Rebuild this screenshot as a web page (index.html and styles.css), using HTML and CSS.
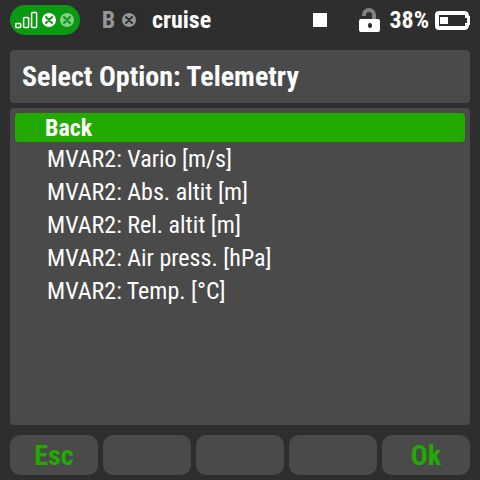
FILE: index.html
```
<!DOCTYPE html>
<html lang="en">

<head>
    <meta charset="UTF-8">
    <meta name="viewport" content="width=device-width, initial-scale=1.0">
    <title>Select Option: Telemetry</title>
    <link rel="stylesheet" href="styles.css">
</head>

<body>

    <header class="status-bar">
        <div class="link active">
            <!-- signal bars and two crossed dots -->
            <svg width="60" height="20" viewBox="0 0 60 20">
                <g fill="none" stroke="#fff" stroke-width="1.5">
                    <rect x="0.7" y="13.4" width="5" height="4" rx="1" />
                    <rect x="8.6" y="7.6" width="5" height="9.8" rx="1" />
                    <rect x="16.6" y="2.6" width="5" height="14.8" rx="1" />
                </g>
                <circle cx="34" cy="10" r="7" fill="#fff" />
                <path d="M31 7l6 6M37 7l-6 6" stroke="#0a9a12" stroke-width="2" stroke-linecap="round" />
                <circle cx="52" cy="10" r="7" fill="#84cc88" />
                <path d="M49 7l6 6M55 7l-6 6" stroke="#0a9a12" stroke-width="2" stroke-linecap="round" />
            </svg>
        </div>
        <div class="link">
            <span>B</span>
            <svg width="14" height="14" viewBox="0 0 14 14">
                <circle cx="7" cy="7" r="7" fill="#969696" />
                <path d="M4 4l6 6M10 4l-6 6" stroke="#2d2d2d" stroke-width="2" stroke-linecap="round" />
            </svg>
        </div>
        <div class="mode">cruise</div>
        <div class="stop"></div>
        <svg class="lock" width="21" height="24" viewBox="0 0 21 24">
            <path d="M5 8V7a5 5 0 0 1 10 0v5" fill="none" stroke="#828282" stroke-width="4" />
            <rect y="11" width="21" height="13" rx="2" fill="#fff" />
            <rect x="9" y="15" width="4" height="5" rx="2" fill="#2d2d2d" />
        </svg>
        <div class="percent">38%</div>
        <svg class="battery" width="35" height="19" viewBox="0 0 35 19">
            <path d="M4 2h25q3 0 3 3v2h1v5h-1v2q0 3-3 3H4q-2 0-2-2V4q0-2 2-2z" fill="none" stroke="#fff" stroke-width="4" />
            <path d="M4 4h26v3h2v5h-2v3H4z" fill="#2d2d2d" />
            <rect x="5" y="6" width="8" height="7" fill="#fff" />
        </svg>
    </header>

    <h1 class="title">Select Option: Telemetry</h1>

    <main class="options">
        <button type="button" class="option selected">Back</button>
        <button type="button" class="option">MVAR2: Vario [m/s]</button>
        <button type="button" class="option">MVAR2: Abs. altit [m]</button>
        <button type="button" class="option">MVAR2: Rel. altit [m]</button>
        <button type="button" class="option">MVAR2: Air press. [hPa]</button>
        <button type="button" class="option">MVAR2: Temp. [°C]</button>
    </main>

    <footer class="keys">
        <button type="button">Esc</button>
        <button type="button" aria-label="F1"></button>
        <button type="button" aria-label="F2"></button>
        <button type="button" aria-label="F3"></button>
        <button type="button">Ok</button>
    </footer>

</body>

</html>
```
FILE: styles.css
```
:root {
    --background: #2e2e2e;
    --panel: #4a4a4a;
    --accent: #22aa00;
    --link: #0a9a12;
}

* {
    margin: 0;
    padding: 0;
    box-sizing: border-box;
}

body {
    min-height: 100vh;
    display: flex;
    flex-direction: column;
    padding: 0 10px 5px;
    background-color: var(--background);
    color: #fff;
    font-family: "Roboto Condensed", "Liberation Sans Narrow", Roboto, sans-serif;
    font-size: 24px;
}

button {
    border: none;
    font-family: inherit;
    cursor: pointer;
}

.status-bar {
    display: flex;
    align-items: center;
    height: 40px;
    margin-bottom: 10px;
    font-weight: bold;
}

.link {
    display: flex;
    align-items: center;
    justify-content: center;
    gap: 7px;
    height: 30px;
    border-radius: 15px;
    width: 54px;
    margin-left: 12px;
    background-color: #2d2d2d;
    color: #969696;
}

.link.active {
    width: 70px;
    margin-left: 0;
    background-color: var(--link);
}

.mode {
    flex: 1;
    margin-left: 6px;
}

.stop {
    width: 14px;
    height: 14px;
    margin-right: 32px;
    background-color: #fff;
}

.lock {
    margin-right: 9px;
}

.percent {
    margin-right: 6px;
}

.title {
    height: 53px;
    padding: 0 12px;
    margin-bottom: 5px;
    border-radius: 4px;
    background-color: var(--panel);
    font-size: 28px;
    line-height: 53px;
}

.options {
    flex: 1;
    display: flex;
    flex-direction: column;
    padding: 5px;
    margin-bottom: 10px;
    border-radius: 4px;
    background-color: var(--panel);
}

.option {
    padding: 2px 32px 0;
    border-radius: 4px;
    background-color: transparent;
    color: #fff;
    font-size: 24px;
    line-height: 31px;
    text-align: left;
}

.option.selected {
    padding: 2px 30px 0;
    background-color: var(--accent);
    font-weight: bold;
    line-height: 27px;
}

.keys {
    display: grid;
    grid-template-columns: repeat(5, 1fr);
    gap: 5px;
}

.keys button {
    height: 40px;
    border-radius: 10px;
    background-color: var(--panel);
    color: var(--accent);
    font-size: 28px;
    font-weight: bold;
}
```
